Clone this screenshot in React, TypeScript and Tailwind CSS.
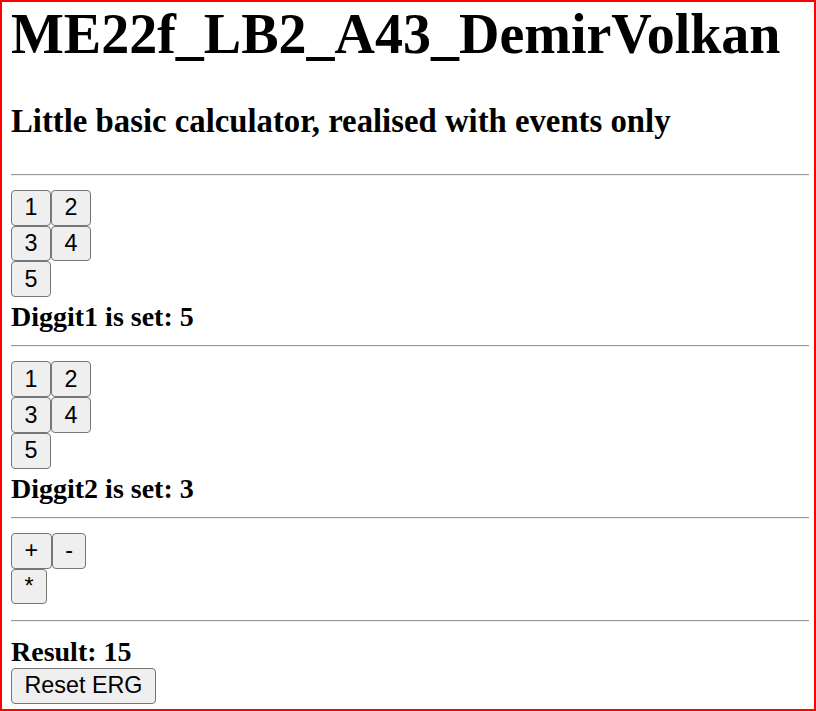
import React, { useState } from "react";

const serif = { fontFamily: '"Liberation Serif", "Times New Roman", serif' };

function Btn({ label, onClick }: { label: string; onClick?: () => void }) {
  return (
    <button
      onClick={onClick}
      className="h-[35.75px] px-[12.5px] border border-[#767676] rounded-[4px] bg-[#efefef] text-black text-[23.33px] leading-[27px] flex items-center justify-center"
      style={{ fontFamily: '"Liberation Sans", Arial, sans-serif' }}
    >
      {label}
    </button>
  );
}

function Hr({ className = "" }: { className?: string }) {
  return <div className={"h-[2px] border-t border-t-[#9a9a9a] border-b border-b-[#eeeeee] " + className} />;
}

export default function App() {
  const [d1, setD1] = useState(5);
  const [d2, setD2] = useState(3);
  const [res, setRes] = useState<number | null>(15);
  const digits = [1, 2, 3, 4, 5];
  return (
    <div
      className="box-border h-[711px] border-2 border-[#ff0000] pl-[9px] pr-[5px] bg-white text-black overflow-hidden"
      style={serif}
    >
      <h1 className="text-[56px] leading-[64px] font-bold">ME22f_LB2_A43_DemirVolkan</h1>
      <h3 className="mt-[36.7px] text-[32.76px] leading-[37px] font-bold">
        Little basic calculator, realised with events only
      </h3>
      <Hr className="mt-[34.3px]" />
      <div className="mt-[14px] flex flex-wrap w-[90px]">
        {digits.map((d) => (
          <Btn key={d} label={String(d)} onClick={() => setD1(d)} />
        ))}
      </div>
      <div className="pt-[4px] text-[28px] leading-[32px] font-bold">Diggit1 is set: {d1}</div>
      <Hr className="mt-[12.25px]" />
      <div className="mt-[14px] flex flex-wrap w-[90px]">
        {digits.map((d) => (
          <Btn key={d} label={String(d)} onClick={() => setD2(d)} />
        ))}
      </div>
      <div className="pt-[4px] text-[28px] leading-[32px] font-bold">Diggit2 is set: {d2}</div>
      <Hr className="mt-[12.25px]" />
      <div className="mt-[14px] flex flex-wrap w-[90px]">
        <Btn label="+" onClick={() => setRes(d1 + d2)} />
        <Btn label="-" onClick={() => setRes(d1 - d2)} />
        <Btn label="*" onClick={() => setRes(d1 * d2)} />
      </div>
      <Hr className="mt-[15.5px]" />
      <div className="mt-[14px] text-[28px] leading-[32px] font-bold">Result: {res ?? ""}</div>
      <div className="flex">
        <Btn label="Reset ERG" onClick={() => setRes(null)} />
      </div>
    </div>
  );
}
